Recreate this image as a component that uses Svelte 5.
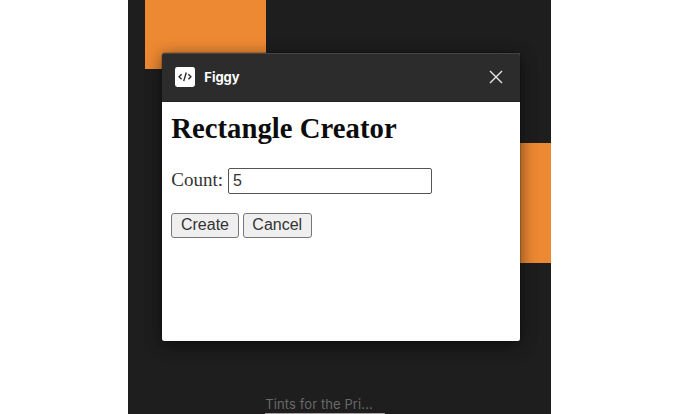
<script>
  let count = $state('5');
</script>

<main class="stage">
  <div class="canvas">
    <div class="shape first"></div>
    <div class="shape second"></div>
    <div class="frame-label">Tints for the Pri...</div>
    <div class="frame-edge"></div>

    <section class="window">
      <header>
        <svg class="logo" width="20" height="20" viewBox="0 0 20 20" aria-hidden="true">
          <rect width="20" height="20" rx="2.4" fill="#fff" />
          <path d="M6.6 7.3 4.1 9.8l2.5 2.5M13.4 7.3l2.5 2.5-2.5 2.5M11.3 5.5 8.7 14.1" fill="none" stroke="#2c2c2c" stroke-width="1.4" />
        </svg>
        <span class="name">Figgy</span>
        <svg class="close" width="14" height="14" viewBox="0 0 14 14" aria-hidden="true">
          <path d="M1 1l12 12M13 1 1 13" fill="none" stroke="#e8e8e8" stroke-width="1.35" />
        </svg>
      </header>
      <div class="content">
        <h2>Rectangle Creator</h2>
        <label><span>Count:</span><input bind:value={count} /></label>
        <div class="actions">
          <button class="create">Create</button>
          <button class="cancel">Cancel</button>
        </div>
      </div>
    </section>
  </div>
</main>

<style>
  :global(body) {
    background: #fff;
  }
  .stage {
    width: 680px;
    height: 414px;
    overflow: hidden;
    display: flex;
    justify-content: center;
  }
  .canvas {
    position: relative;
    width: 423px;
    height: 414px;
    margin-left: -0.5px;
    background: #1e1e1e;
    overflow: hidden;
  }
  .shape {
    position: absolute;
    background: #ee8933;
  }
  .first {
    left: 17px;
    top: -52px;
    width: 121px;
    height: 120.5px;
  }
  .second {
    left: 303px;
    top: 143px;
    width: 121px;
    height: 120px;
  }
  .frame-label {
    position: absolute;
    left: 137px;
    top: 396px;
    font: 13px/16px Inter, sans-serif;
    letter-spacing: 0.1px;
    color: #696969;
    white-space: nowrap;
  }
  .frame-edge {
    position: absolute;
    left: 137px;
    top: 413px;
    width: 120px;
    height: 1px;
    background: #a4a0a0;
  }
  .window {
    position: absolute;
    left: 33.5px;
    top: 53px;
    width: 358.6px;
    height: 288px;
    background: #fff;
    border-radius: 2.5px;
    box-shadow: 0 2px 16px rgba(0, 0, 0, 0.35), 0 6px 18px rgba(0, 0, 0, 0.25), 0 0 0 0.5px rgba(0, 0, 0, 0.3);
    overflow: hidden;
  }
  header {
    display: flex;
    align-items: center;
    box-sizing: border-box;
    height: 48.5px;
    padding: 0 17px 0 13.5px;
    background: #2c2c2c;
    border-top: 1px solid #444;
    border-bottom: 1px solid #232323;
  }
  .name {
    margin-left: 9px;
    font: 700 13px/16px Inter, sans-serif;
    color: #fff;
  }
  .close {
    margin-left: auto;
  }
  .content {
    padding: 10px 10px 0 9.5px;
    font-family: 'Liberation Serif', serif;
  }
  h2 {
    margin: 0;
    font-size: 28.7px;
    line-height: 33px;
    letter-spacing: 0.03px;
    color: #0c0c0c;
    white-space: nowrap;
  }
  label {
    display: flex;
    align-items: center;
    margin-top: 23px;
    font-size: 19px;
    line-height: 26px;
    color: #333;
  }
  label span {
    padding-bottom: 2px;
    line-height: 24px;
  }
  input {
    box-sizing: border-box;
    width: 204.5px;
    height: 26px;
    margin: 0 0 0 5px;
    padding: 0 4px;
    border: 1px solid #555;
    border-radius: 2px;
    background: #fff;
    font: 16px 'Liberation Sans', sans-serif;
    color: #333;
    outline: none;
  }
  .actions {
    display: flex;
    gap: 4px;
    margin-top: 19px;
  }
  button {
    box-sizing: border-box;
    height: 25px;
    padding: 0;
    border: 1px solid #777;
    border-radius: 3px;
    background: #efefef;
    font: 16px/22px 'Liberation Sans', sans-serif;
    color: #333;
  }
  .create {
    width: 67.5px;
  }
  .cancel {
    width: 69px;
  }
</style>
